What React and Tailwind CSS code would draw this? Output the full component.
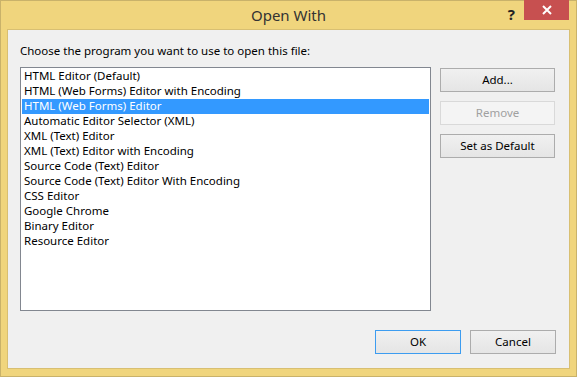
const programs = [
  'HTML Editor (Default)',
  'HTML (Web Forms) Editor with Encoding',
  'HTML (Web Forms) Editor',
  'Automatic Editor Selector (XML)',
  'XML (Text) Editor',
  'XML (Text) Editor with Encoding',
  'Source Code (Text) Editor',
  'Source Code (Text) Editor With Encoding',
  'CSS Editor',
  'Google Chrome',
  'Binary Editor',
  'Resource Editor',
];

function DlgButton({ children, disabled, isDefault, className = '' }) {
  const border = isDefault
    ? 'border-[#3c9cf0]'
    : disabled
    ? 'border-[#d9d9d9]'
    : 'border-[#acacac]';
  return (
    <button
      className={`h-[24px] border ${border} ${
        disabled ? 'bg-[#f4f4f4] text-[#a0a0a0]' : 'bg-gradient-to-b from-[#f0f0f0] to-[#e5e5e5] text-black'
      } text-[11.5px] leading-none ${className}`}
    >
      {children}
    </button>
  );
}

export default function App() {
  const selected = 2;

  return (
    <div
      className="w-[577px] h-[377px] bg-[#f0d57d] border border-[#c9b26a] flex flex-col"
      style={{ fontFamily: '"Noto Sans", "Open Sans", sans-serif' }}
    >
      {/* title bar */}
      <div className="relative h-[28px] flex items-center justify-center">
        <span className="text-[15px] text-[#333] mt-[1px]">Open With</span>
        <span className="absolute right-[61px] top-[2px] text-[15px] font-bold text-[#222]">?</span>
        <div className="absolute right-[7px] top-[-1px] w-[45px] h-[20px] bg-[#c75050] flex items-center justify-center">
          <svg width="10" height="10" viewBox="0 0 10 10">
            <path d="M1 1 L9 9 M9 1 L1 9" stroke="white" strokeWidth="2" />
          </svg>
        </div>
      </div>

      {/* client area */}
      <div className="flex-1 mx-[6px] mb-[7px] bg-[#f0f0f0] border border-[#d8bf72] flex flex-col px-[12px]">
        <p className="mt-[13px] text-[11.5px] text-black leading-[15px]">
          Choose the program you want to use to open this file:
        </p>

        <div className="mt-[9px] flex gap-[9px]">
          <div className="w-[411px] h-[244px] bg-white border border-[#828790] p-[1px]">
            {programs.map((p, i) => (
              <div
                key={p}
                className={`h-[15px] pl-[2px] text-[11.5px] leading-[14px] whitespace-nowrap ${
                  i === selected ? 'bg-[#3399ff] text-white' : 'text-black'
                }`}
              >
                {p}
              </div>
            ))}
          </div>

          <div className="w-[115px] flex flex-col gap-[9px] pt-[1px]">
            <DlgButton>Add...</DlgButton>
            <DlgButton disabled>Remove</DlgButton>
            <DlgButton>Set as Default</DlgButton>
          </div>
        </div>

        <div className="mt-[19px] flex justify-end gap-[9px] pr-[1px]">
          <DlgButton isDefault className="w-[86px]">OK</DlgButton>
          <DlgButton className="w-[86px]">Cancel</DlgButton>
        </div>
      </div>
    </div>
  );
}
